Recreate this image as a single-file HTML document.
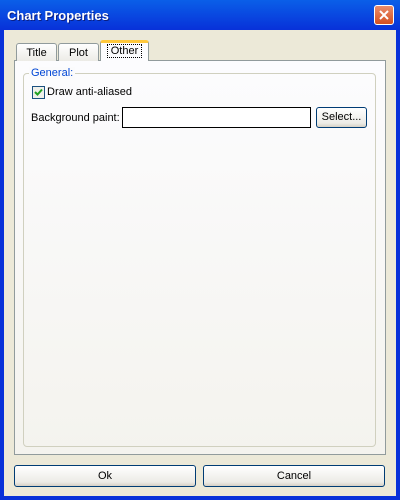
<!DOCTYPE html><html><head><style>
body{margin:0;width:400px;height:500px;overflow:hidden;font-family:"Liberation Sans",sans-serif;font-size:11px}
.win{position:absolute;left:0;top:0;width:400px;height:500px;background:linear-gradient(#0a5fe8,#0831d9 30px);}
.title{position:absolute;left:7px;top:8px;color:#fff;font-weight:bold;font-size:13px;text-shadow:1px 1px #0a1e80}
.close{position:absolute;left:374px;top:5px;width:20px;height:20px;border:1px solid #fff;border-radius:3px;background:linear-gradient(#e98c6c,#d5501f);box-sizing:border-box}
.body{position:absolute;left:4px;top:30px;width:392px;height:466px;background:#ece9d8}
.panel{position:absolute;left:14px;top:60px;width:372px;height:395px;border:1px solid #919b9c;box-sizing:border-box;background:linear-gradient(#fcfcfe,#f4f3ee)}
.tab{position:absolute;top:43px;height:18px;border:1px solid #919b9c;border-bottom:none;border-radius:3px 3px 0 0;background:linear-gradient(#fff,#ecebe6);box-sizing:border-box;text-align:center;line-height:18px;color:#000}
.group{position:absolute;left:23px;top:73px;width:353px;height:374px;border:1px solid #d0d0bf;border-radius:4px;box-sizing:border-box}
.btn{position:absolute;border:1px solid #003c74;border-radius:3px;box-sizing:border-box;background:linear-gradient(#fff,#ecebe6 80%,#d6d0c5);text-align:center}
</style></head><body>
<div class="win"><div class="title">Chart Properties</div>
<div class="close"><svg width="18" height="18" viewBox="0 0 18 18"><path d="M5 5L13 13M13 5L5 13" stroke="#fff" stroke-width="2"/></svg></div>
<div class="body"></div>
<div class="panel"></div>
<div class="tab" style="left:16px;width:41px">Title</div>
<div class="tab" style="left:58px;width:41px">Plot</div>
<div class="tab" style="left:100px;top:40px;width:49px;height:21px;background:#fcfcfe;border-top:3px solid #ffc83c;line-height:16px"><span style="outline:1px dotted #000;padding:0 3px">Other</span></div>
<div class="group"></div>
<div style="position:absolute;left:29px;top:67px;background:#fbfbfc;color:#0046d5;padding:0 2px">General:</div>
<div style="position:absolute;left:32px;top:86px;width:13px;height:13px;border:1px solid #1c5180;box-sizing:border-box;background:#f0f0ea"><svg width="11" height="11" viewBox="0 0 11 11"><path d="M2 5L4.5 7.5L9 2.5" stroke="#21a121" stroke-width="2" fill="none"/></svg></div>
<div style="position:absolute;left:47px;top:86px">Draw anti-aliased</div>
<div style="position:absolute;left:31px;top:112px">Background paint:</div>
<div style="position:absolute;left:122px;top:107px;width:189px;height:21px;border:1px solid #000;background:#fff;box-sizing:border-box"></div>
<div class="btn" style="left:316px;top:107px;width:51px;height:21px;line-height:19px">Select...</div>
<div class="btn" style="left:14px;top:465px;width:182px;height:22px;line-height:20px">Ok</div>
<div class="btn" style="left:203px;top:465px;width:182px;height:22px;line-height:20px">Cancel</div>
</div></body></html>
